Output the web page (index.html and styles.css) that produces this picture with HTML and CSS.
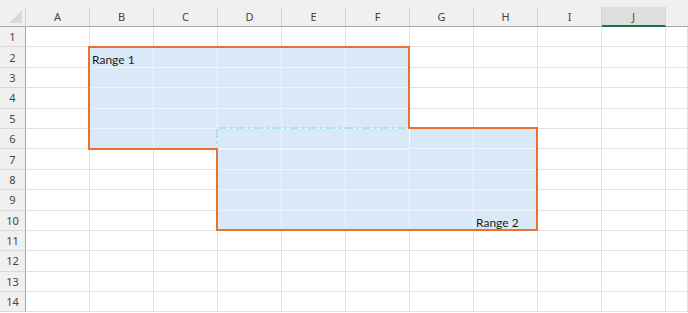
FILE: index.html
```html
<!DOCTYPE html>
<html lang="en">
<head>
    <meta charset="UTF-8">
    <meta name="viewport" content="width=device-width, initial-scale=1.0">
    <title>Sheet1</title>
    <link rel="stylesheet" href="styles.css">
</head>
<body>
<div class="sheet">
    <div class="row head">
        <div class="corner">
            <svg width="14" height="14" viewBox="0 0 14 14"><path d="M13 0V13H0Z" fill="#d9d9d9"/></svg>
        </div>
        <div>A</div><div>B</div><div>C</div><div>D</div><div>E</div>
        <div>F</div><div>G</div><div>H</div><div>I</div><div class="on">J</div><div class="last"></div>
    </div>

    <div class="row"><div class="rh">1</div>
        <div class="c"></div><div class="c"></div><div class="c"></div><div class="c"></div><div class="c"></div>
        <div class="c"></div><div class="c"></div><div class="c"></div><div class="c"></div><div class="c"></div><div class="c"></div>
    </div>
    <div class="row"><div class="rh">2</div>
        <div class="c"></div><div class="c sel txt">Range 1</div><div class="c sel"></div><div class="c sel"></div><div class="c sel"></div>
        <div class="c sel"></div><div class="c"></div><div class="c"></div><div class="c"></div><div class="c"></div><div class="c"></div>
    </div>
    <div class="row"><div class="rh">3</div>
        <div class="c"></div><div class="c sel"></div><div class="c sel"></div><div class="c sel"></div><div class="c sel"></div>
        <div class="c sel"></div><div class="c"></div><div class="c"></div><div class="c"></div><div class="c"></div><div class="c"></div>
    </div>
    <div class="row"><div class="rh">4</div>
        <div class="c"></div><div class="c sel"></div><div class="c sel"></div><div class="c sel"></div><div class="c sel"></div>
        <div class="c sel"></div><div class="c"></div><div class="c"></div><div class="c"></div><div class="c"></div><div class="c"></div>
    </div>
    <div class="row"><div class="rh">5</div>
        <div class="c"></div><div class="c sel"></div><div class="c sel"></div><div class="c sel"></div><div class="c sel"></div>
        <div class="c sel"></div><div class="c"></div><div class="c"></div><div class="c"></div><div class="c"></div><div class="c"></div>
    </div>
    <div class="row"><div class="rh">6</div>
        <div class="c"></div><div class="c sel"></div><div class="c sel"></div><div class="c sel"></div><div class="c sel"></div>
        <div class="c sel"></div><div class="c sel"></div><div class="c sel"></div><div class="c"></div><div class="c"></div><div class="c"></div>
    </div>
    <div class="row"><div class="rh">7</div>
        <div class="c"></div><div class="c"></div><div class="c"></div><div class="c sel"></div><div class="c sel"></div>
        <div class="c sel"></div><div class="c sel"></div><div class="c sel"></div><div class="c"></div><div class="c"></div><div class="c"></div>
    </div>
    <div class="row"><div class="rh">8</div>
        <div class="c"></div><div class="c"></div><div class="c"></div><div class="c sel"></div><div class="c sel"></div>
        <div class="c sel"></div><div class="c sel"></div><div class="c sel"></div><div class="c"></div><div class="c"></div><div class="c"></div>
    </div>
    <div class="row"><div class="rh">9</div>
        <div class="c"></div><div class="c"></div><div class="c"></div><div class="c sel"></div><div class="c sel"></div>
        <div class="c sel"></div><div class="c sel"></div><div class="c sel"></div><div class="c"></div><div class="c"></div><div class="c"></div>
    </div>
    <div class="row"><div class="rh">10</div>
        <div class="c"></div><div class="c"></div><div class="c"></div><div class="c sel"></div><div class="c sel"></div>
        <div class="c sel"></div><div class="c sel"></div><div class="c sel txt">Range 2</div><div class="c"></div><div class="c"></div><div class="c"></div>
    </div>
    <div class="row"><div class="rh">11</div>
        <div class="c"></div><div class="c"></div><div class="c"></div><div class="c"></div><div class="c"></div>
        <div class="c"></div><div class="c"></div><div class="c"></div><div class="c"></div><div class="c"></div><div class="c"></div>
    </div>
    <div class="row"><div class="rh">12</div>
        <div class="c"></div><div class="c"></div><div class="c"></div><div class="c"></div><div class="c"></div>
        <div class="c"></div><div class="c"></div><div class="c"></div><div class="c"></div><div class="c"></div><div class="c"></div>
    </div>
    <div class="row"><div class="rh">13</div>
        <div class="c"></div><div class="c"></div><div class="c"></div><div class="c"></div><div class="c"></div>
        <div class="c"></div><div class="c"></div><div class="c"></div><div class="c"></div><div class="c"></div><div class="c"></div>
    </div>
    <div class="row"><div class="rh">14</div>
        <div class="c"></div><div class="c"></div><div class="c"></div><div class="c"></div><div class="c"></div>
        <div class="c"></div><div class="c"></div><div class="c"></div><div class="c"></div><div class="c"></div><div class="c"></div>
    </div>

    <!-- selection outlines drawn over the cells -->
    <svg class="marks" width="688" height="313">
        <path d="M89 47H409V128H537V230H217V149H89Z" fill="none" stroke="#e97132" stroke-width="2"/>
        <path d="M218 128H406M217 129V148" fill="none" stroke="#b2dff2" stroke-width="2" stroke-dasharray="9 3 3 3"/>
        <path d="M218 149.5H408M409.5 129V149" fill="none" stroke="#ffffff" stroke-width="1" stroke-dasharray="1 1"/>
    </svg>
</div>
</body>
</html>
```

FILE: styles.css
```css
:root {
    --head-bg: #f0f0f0;
    --head-line: #a9a9a9;
    --head-divider: #d4d4d4;
    --grid-line: #e1e1e1;
    --sel-bg: #dae9f8;
    --sel-line: #eef4fb;
    --active-green: #1e7145;
}

* {
    box-sizing: border-box;
}

body {
    margin: 0;
    background-color: #ffffff;
    font-family: 'Noto Sans', 'Liberation Sans', sans-serif;
    overflow: hidden;
}

.sheet {
    position: relative;
    width: 688px;
    height: 313px;
    overflow: hidden;
}

.row {
    display: grid;
    grid-template-columns: 26px repeat(10, 64px) 1fr;
    height: 20.4px;
}

/* column letters */
.head {
    height: 27px;
    background-color: var(--head-bg);
    align-items: end;
}

.head > div {
    height: 20px;
    display: flex;
    align-items: center;
    justify-content: center;
    border-right: 1px solid var(--head-divider);
    border-bottom: 1px solid var(--head-line);
    font-size: 11px;
    color: #444444;
}

.head .corner {
    align-items: flex-end;
    justify-content: flex-end;
    padding: 0 2px 2px 0;
}

.head .corner svg {
    display: block;
}

.head .on {
    background-color: #dedede;
    border-bottom: 2px solid var(--active-green);
    color: #1e6b41;
}

.head .last {
    border-right: none;
}

/* row numbers */
.rh {
    display: flex;
    align-items: center;
    justify-content: center;
    background-color: var(--head-bg);
    border-right: 1px solid var(--head-line);
    border-bottom: 1px solid #dadada;
    font-size: 11px;
    color: #444444;
}

.c {
    border-right: 1px solid var(--grid-line);
    border-bottom: 1px solid var(--grid-line);
}

.c.sel {
    background-color: var(--sel-bg);
    border-color: var(--sel-line);
}

.c.txt {
    display: flex;
    align-items: flex-end;
    padding-left: 2px;
    font-family: Lato, 'Liberation Sans', sans-serif;
    font-size: 12px;
    line-height: 15px;
    white-space: nowrap;
    color: #1b1b1b;
}

.marks {
    position: absolute;
    left: 0;
    top: 0;
    pointer-events: none;
}
```
